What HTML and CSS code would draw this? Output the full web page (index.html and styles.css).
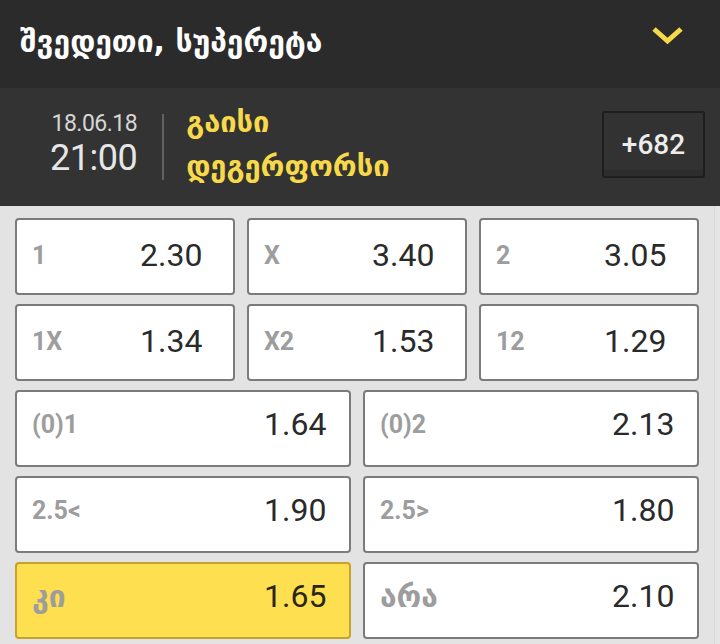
FILE: index.html
```html
<!DOCTYPE html>
<html lang="ka">
<head>
    <meta charset="UTF-8">
    <meta name="viewport" content="width=device-width, initial-scale=1.0">
    <title>შვედეთი, სუპერეტა</title>
    <link rel="stylesheet" href="styles.css">
</head>
<body>
    <header class="top">
        <h1 class="league">შვედეთი, სუპერეტა</h1>
        <svg class="chevron" width="34" height="22" viewBox="0 0 34 22">
            <polyline points="3,4 16.5,16 30,4" fill="none" stroke="#f6d84a" stroke-width="5" stroke-linejoin="miter"/>
        </svg>
    </header>

    <section class="event">
        <div class="when">
            <span class="date">18.06.18</span>
            <span class="time">21:00</span>
        </div>
        <div class="divider"></div>
        <div class="teams">
            <span class="team">გაისი</span>
            <span class="team">დეგერფორსი</span>
        </div>
        <div class="more">+682</div>
    </section>

    <main class="markets">
        <div class="row three">
            <div class="cell"><span class="label">1</span><span class="odd">2.30</span></div>
            <div class="cell"><span class="label">X</span><span class="odd">3.40</span></div>
            <div class="cell"><span class="label">2</span><span class="odd">3.05</span></div>
        </div>
        <div class="row three">
            <div class="cell"><span class="label">1X</span><span class="odd">1.34</span></div>
            <div class="cell"><span class="label">X2</span><span class="odd">1.53</span></div>
            <div class="cell"><span class="label">12</span><span class="odd">1.29</span></div>
        </div>
        <div class="row two">
            <div class="cell"><span class="label">(0)1</span><span class="odd">1.64</span></div>
            <div class="cell"><span class="label">(0)2</span><span class="odd">2.13</span></div>
        </div>
        <div class="row two">
            <div class="cell"><span class="label">2.5&lt;</span><span class="odd">1.90</span></div>
            <div class="cell"><span class="label">2.5&gt;</span><span class="odd">1.80</span></div>
        </div>
        <div class="row two">
            <div class="cell selected"><span class="label geo">კი</span><span class="odd">1.65</span></div>
            <div class="cell"><span class="label geo">არა</span><span class="odd">2.10</span></div>
        </div>
    </main>
</body>
</html>
```

FILE: styles.css
```css
* {
    margin: 0;
    padding: 0;
    box-sizing: border-box;
}

body {
    width: 720px;
    height: 644px;
    overflow: hidden;
    background-color: #e3e3e3;
    font-family: Roboto, 'DejaVu Sans', sans-serif;
}

.top {
    height: 88px;
    background-color: #2b2b2b;
    display: flex;
    align-items: center;
    justify-content: space-between;
    padding: 0 35px 0 20px;
}

.league {
    font-family: 'DejaVu Sans', sans-serif;
    font-weight: bold;
    font-size: 30px;
    color: #ffffff;
    margin-top: -6px;
}

.chevron {
    display: block;
    margin-top: -17px;
}

.event {
    height: 118px;
    background-color: #333333;
    display: flex;
    align-items: center;
    padding: 0 15px 0 50px;
}

.when {
    display: flex;
    flex-direction: column;
    align-items: flex-end;
    margin-top: -6px;
}

.date {
    font-size: 23px;
    color: #d6d6d6;
    line-height: 28px;
    letter-spacing: -0.5px;
}

.time {
    font-size: 36px;
    color: #e6e6e6;
    line-height: 40px;
    letter-spacing: -0.5px;
}

.divider {
    width: 2px;
    height: 66px;
    background-color: #626262;
    margin: 0 22px 0 25px;
}

.teams {
    display: flex;
    flex-direction: column;
    gap: 8px;
    margin-top: -6px;
}

.team {
    font-family: 'DejaVu Sans', sans-serif;
    font-weight: bold;
    font-size: 29px;
    line-height: 36px;
    color: #f8d94a;
}

.more {
    margin-left: auto;
    width: 103px;
    height: 67px;
    border: 2px solid #1e1e1e;
    border-radius: 3px;
    background-color: #323232;
    box-shadow: inset 0 -6px 0 #2d2d2d;
    display: flex;
    align-items: center;
    justify-content: center;
    color: #ececec;
    font-size: 28px;
    font-weight: 500;
    margin-top: -6px;
}

.markets {
    height: 438px;
    padding: 12px 21px 0 15px;
    display: flex;
    flex-direction: column;
    gap: 9px;
    /* faint scroll track line on the right */
    background: linear-gradient(to right, #e3e3e3 714px, #d8d8d8 714px, #d8d8d8 715px, #e5e5e5 715px);
}

.row {
    display: grid;
    gap: 12px;
}

.row.three {
    grid-template-columns: repeat(3, 1fr);
}

.row.two {
    grid-template-columns: repeat(2, 1fr);
}

.cell {
    height: 77px;
    background-color: #ffffff;
    border: 2px solid #7b7b7b;
    border-radius: 4px;
    display: flex;
    align-items: center;
    padding-left: 15px;
}

.row.three .cell {
    padding-bottom: 3px;
}

.row.two .cell {
    padding-bottom: 9px;
}

.cell.selected {
    background-color: #fddf4f;
    border-color: #c4a42c;
}

.label {
    font-size: 25px;
    font-weight: bold;
    color: #9d9d9d;
}

.label.geo {
    font-family: 'DejaVu Sans', sans-serif;
    font-size: 30px;
}

.row.three .label {
    width: 108px;
}

.row.two .label {
    width: 232px;
}

.odd {
    font-size: 32px;
    color: #2a2a2a;
}

.selected .odd {
    color: #2a2616;
}
```
